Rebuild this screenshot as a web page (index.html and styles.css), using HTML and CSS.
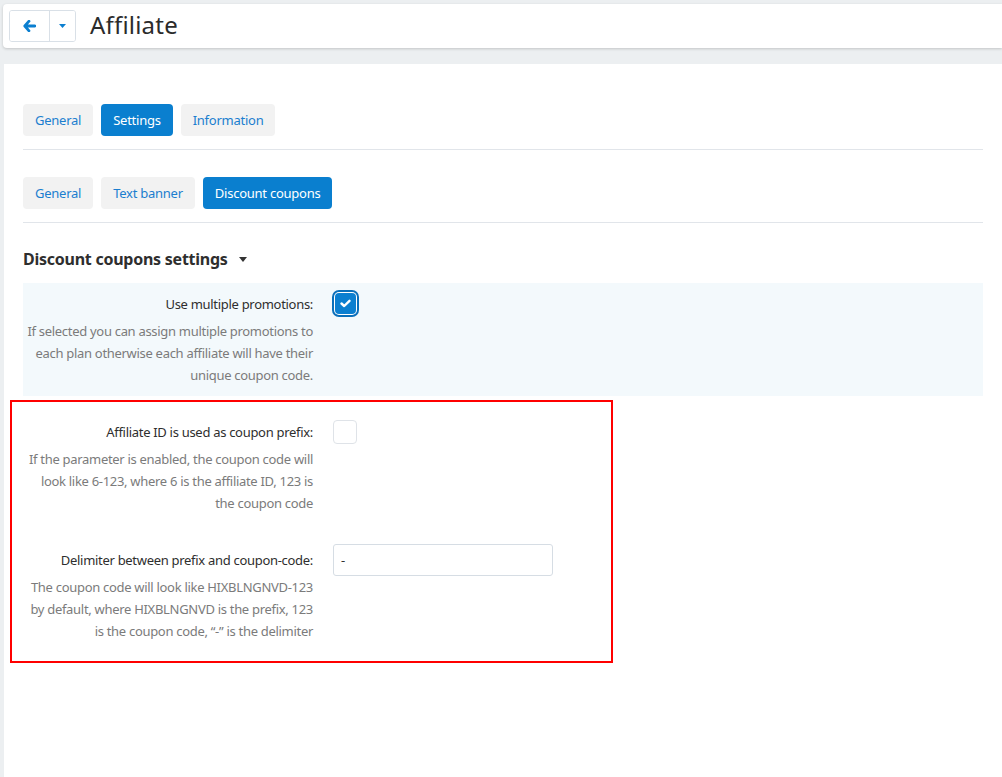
FILE: index.html
```html
<!DOCTYPE html>
<html lang="en">
<head>
<meta charset="utf-8">
<title>Affiliate</title>
<link rel="stylesheet" href="styles.css">
</head>
<body>
<header class="topbar">
  <div class="btn-group">
    <button class="btn-back" aria-label="Back">
      <svg width="13" height="12" viewBox="0 0 13 12"><path d="M6 1.2 L1.8 6 L6 10.8 M2.2 6 H11.8" fill="none" stroke="#0b7fd0" stroke-width="2.8" stroke-linecap="round" stroke-linejoin="round"/></svg>
    </button>
    <button class="btn-drop" aria-label="More">
      <svg width="7" height="4" viewBox="0 0 7 4"><path d="M0 0 H7 L3.5 4 Z" fill="#0b7fd0"/></svg>
    </button>
  </div>
  <h1 class="title">Affiliate</h1>
</header>

<main class="card">
  <nav class="tabs">
    <a class="tab">General</a>
    <a class="tab active">Settings</a>
    <a class="tab">Information</a>
  </nav>
  <nav class="tabs">
    <a class="tab">General</a>
    <a class="tab">Text banner</a>
    <a class="tab active">Discount coupons</a>
  </nav>

  <h2 class="section-title">Discount coupons settings <span class="caret"></span></h2>

  <div class="row shaded">
    <div class="label-col">
      <div class="label">Use multiple promotions:</div>
      <div class="help">If selected you can assign multiple promotions to each plan otherwise each affiliate will have their unique coupon code.</div>
    </div>
    <div class="control-col">
      <span class="checkbox checked">
        <svg width="11" height="9" viewBox="0 0 11 9"><path d="M1.5 4.5 L4.2 7 L9.5 1.8" fill="none" stroke="#fff" stroke-width="2.4" stroke-linecap="round" stroke-linejoin="round"/></svg>
      </span>
    </div>
  </div>

  <div class="highlight">
    <div class="row">
      <div class="label-col">
        <div class="label">Affiliate ID is used as coupon prefix:</div>
        <div class="help">If the parameter is enabled, the coupon code will look like 6-123, where 6 is the affiliate ID, 123 is the coupon code</div>
      </div>
      <div class="control-col">
        <span class="checkbox"></span>
      </div>
    </div>
    <div class="row row-gap">
      <div class="label-col">
        <div class="label">Delimiter between prefix and coupon-code:</div>
        <div class="help">The coupon code will look like HIXBLNGNVD-123 by default, where HIXBLNGNVD is the prefix, 123 is the coupon code, “-” is the delimiter</div>
      </div>
      <div class="control-col">
        <input class="text-input" type="text" value="-">
      </div>
    </div>
  </div>
</main>
</body>
</html>
```

FILE: styles.css
```css
* { box-sizing: border-box; }
html, body { height: 100%; }
body {
  margin: 0;
  background: #eceff1;
  font-family: "Noto Sans", "Open Sans", sans-serif;
  color: #333;
  font-size: 13px;
  letter-spacing: -0.3px;
  overflow: hidden;
}
.topbar {
  margin: 4px 0 0 3px;
  height: 44px;
  background: #fff;
  border-radius: 4px 0 0 4px;
  box-shadow: 0 1px 3px rgba(0,0,0,0.18);
  display: flex;
  align-items: center;
  padding-left: 6px;
}
.btn-group {
  display: flex;
  height: 32px;
  border: 1px solid #d9e0e7;
  border-radius: 3px;
  overflow: hidden;
}
.btn-group button {
  background: #fff;
  border: 0;
  padding: 0;
  display: flex;
  align-items: center;
  justify-content: center;
}
.btn-back { width: 40px; border-right: 1px solid #d9e0e7 !important; }
.btn-drop { width: 25px; }
.title {
  margin: -3px 0 0 14px;
  font-size: 24px;
  font-weight: 400;
  color: #2b2b2b;
  letter-spacing: 0.2px;
}
.card {
  margin: 16px 0 0 4px;
  background: #fff;
  min-height: 720px;
  padding: 40px 19px 0 19px;
}
.tabs {
  display: flex;
  gap: 8px;
  padding-bottom: 13px;
  border-bottom: 1px solid #e1e5ea;
  margin-bottom: 27px;
}
.tab {
  display: block;
  height: 32px;
  line-height: 32px;
  padding: 0 12px;
  background: #f2f2f2;
  color: #1b7ecf;
  border-radius: 4px;
  letter-spacing: -0.25px;
}
.tab.active { background: #0a7fcf; color: #fff; }
.tabs + .tabs { margin-bottom: 0; }
.section-title {
  margin: 24px 0 12px 0;
  font-size: 16px;
  font-weight: 700;
  letter-spacing: -0.25px;
  color: #2e2e2e;
  display: flex;
  align-items: center;
  height: 24px;
}
.caret {
  display: inline-block;
  width: 0; height: 0;
  border-left: 4.5px solid transparent;
  border-right: 4.5px solid transparent;
  border-top: 5px solid #333;
  margin-left: 11px;
  margin-top: 1px;
}
.row {
  display: flex;
  padding: 10px 0;
}
.row.shaded { background: #f3f9fc; }
.label-col {
  width: 290px;
  text-align: right;
}
.label { line-height: 22px; color: #2e2e2e; }
.help {
  margin-top: 5px;
  line-height: 22px;
  color: #7b7b7b;
}
.control-col { padding-left: 20px; }
.checkbox {
  display: flex;
  align-items: center;
  justify-content: center;
  width: 24px;
  height: 24px;
  border: 1px solid #dfe3e8;
  border-radius: 4px;
  background: #fff;
  margin-top: -1px;
}
.checkbox.checked {
  width: 21px; height: 21px;
  margin: 0 0 0 2px;
  background: #0b7fd0;
  border: 0;
  box-shadow: 0 0 0 1px #fff, 0 0 0 3px #0a6fba;
}
.highlight {
  margin: 4px 0 0 -13px;
  width: 603px;
  border: 2px solid #ff0000;
  padding: 9px 0 9px 11px;
}
.row-gap { margin-top: 15px; }
.text-input {
  display: block;
  width: 220px;
  height: 32px;
  margin-top: -5px;
  border: 1px solid #d6dde4;
  border-radius: 3px;
  padding: 0 7px;
  font: inherit;
  color: #333;
}
```
